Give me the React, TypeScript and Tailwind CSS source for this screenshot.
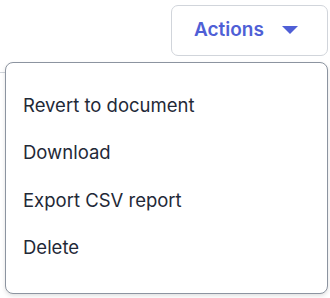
import React from "react";

export default function App() {
  const items = ["Revert to document", "Download", "Export CSV report", "Delete"];
  return (
    <div className="relative w-[330px] h-[298px] bg-white overflow-hidden" style={{ fontFamily: "Inter, 'Noto Sans', sans-serif" }}>
      <div className="absolute left-0 top-[72px] w-[20px] h-px bg-[#d1d5db]" />
      <div className="flex justify-end pt-[5px] pr-[2px]">
        <button className="flex items-center h-[51px] w-[157px] pl-[22px] gap-[18px] border border-[#d1d5db] rounded-[7px] bg-white text-[#4f5fd6] text-[19px] font-semibold">
          <span>Actions</span>
          <svg width="16" height="9" viewBox="0 0 16 9"><path d="M0 0 L16 0 L8 8 Z" fill="#4f5fd6" /></svg>
        </button>
      </div>
      <div className="absolute left-[5px] top-[62px] w-[323px] h-[232px] border border-[#8c94a0] rounded-[8px] bg-white shadow-[0_2px_4px_rgba(0,0,0,0.12)] pt-[19px]">
        {items.map((t) => (
          <div key={t} className="h-[47.5px] flex items-center pl-[17px] text-[18.5px] text-[#1f2937]">
            {t}
          </div>
        ))}
      </div>
    </div>
  );
}
